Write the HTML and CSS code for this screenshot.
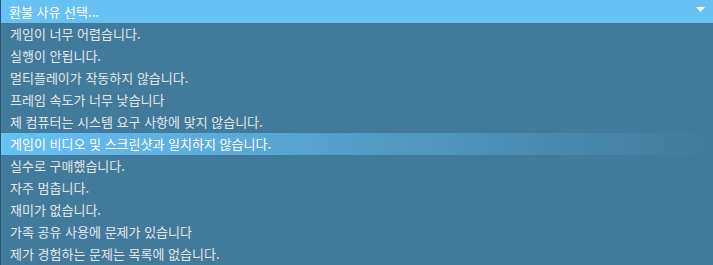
FILE: index.html
```html
<!DOCTYPE html>
<html lang="ko">
<head>
<meta charset="utf-8">
<title>환불 사유 선택</title>
<link rel="stylesheet" href="styles.css">
</head>
<body>
<div class="dropdown">
  <div class="trigger">
    <span class="trigger-label">환불 사유 선택...</span>
    <svg class="arrow" width="9" height="5" viewBox="0 0 9 5"><polygon points="0,0 9,0 4.5,5" fill="#ffffff"/></svg>
  </div>
  <ul class="options">
    <li class="option">게임이 너무 어렵습니다.</li>
    <li class="option">실행이 안됩니다.</li>
    <li class="option">멀티플레이가 작동하지 않습니다.</li>
    <li class="option">프레임 속도가 너무 낮습니다</li>
    <li class="option">제 컴퓨터는 시스템 요구 사항에 맞지 않습니다.</li>
    <li class="option option-active">게임이 비디오 및 스크린샷과 일치하지 않습니다.</li>
    <li class="option">실수로 구매했습니다.</li>
    <li class="option">자주 멈춥니다.</li>
    <li class="option">재미가 없습니다.</li>
    <li class="option">가족 공유 사용에 문제가 있습니다</li>
    <li class="option">제가 경험하는 문제는 목록에 없습니다.</li>
  </ul>
</div>
</body>
</html>
```

FILE: styles.css
```css
html, body {
  margin: 0;
  padding: 0;
  background: #417a9b;
}

.dropdown {
  width: 713px;
  height: 265px;
  overflow: hidden;
  box-sizing: border-box;
  border-left: 1px solid #2b5674;
  font-family: "Noto Sans CJK KR", "Noto Sans", Arial, sans-serif;
  font-size: 13px;
}

.trigger {
  height: 23px;
  background: #67c1f5;
  display: flex;
  align-items: center;
  justify-content: space-between;
  padding: 0 8px 0 8px;
  color: #ffffff;
}

.trigger-label {
  line-height: 23px;
}

.arrow {
  display: block;
  margin-top: -4px;
}

.options {
  list-style: none;
  margin: 0;
  padding: 0;
  background: #417a9b;
}

.option {
  height: 22px;
  line-height: 21px;
  padding: 0 9px;
  color: #e3e8ec;
  white-space: nowrap;
}

.option-active {
  color: #ffffff;
  background: linear-gradient(to right, #67c1f5 0%, #417a9b 100%);
}
```
